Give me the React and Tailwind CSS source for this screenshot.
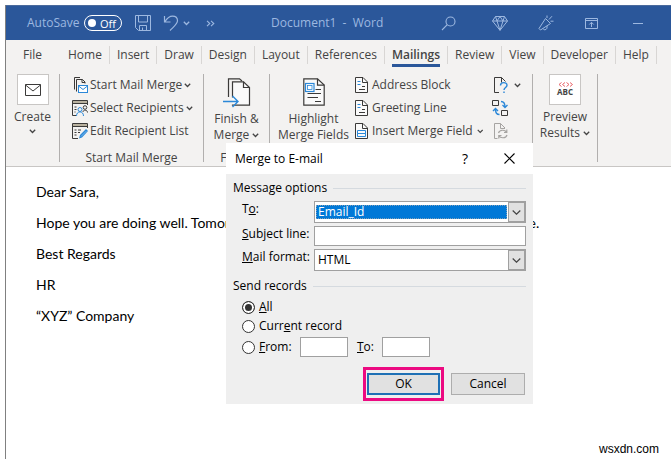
import React from 'react';

const TABS = ['Home', 'Insert', 'Draw', 'Design', 'Layout', 'References', 'Mailings', 'Review', 'View', 'Developer', 'Help'];

function Chevron({ className = '' }) {
  return (
    <svg className={`inline-block w-[7px] h-[5px] ${className}`} viewBox="0 0 7 5" fill="none" stroke="currentColor" strokeWidth="1.3">
      <path d="M0.8 0.8L3.5 3.5L6.2 0.8" />
    </svg>
  );
}

function Divider() {
  return <div className="w-px h-[88px] bg-[#b1afae] shrink-0" />;
}

/* ---------- title bar ---------- */

function TitleBar() {
  return (
    <header className="flex items-center h-[35px] bg-[#2b579a] border-t border-[#4a6a9c] text-[#9db8e0] text-xs pl-[21px] pr-[28px]">
      <span className="w-[57px] whitespace-nowrap">AutoSave</span>
      <button
        type="button"
        role="switch"
        aria-checked="false"
        aria-label="AutoSave"
        className="flex items-center justify-between w-[38px] h-4 rounded-full border border-white pl-[3px] pr-[5px] text-white text-[11px] leading-none"
      >
        <span className="w-2 h-2 rounded-full bg-white" />
        Off
      </button>
      <button type="button" aria-label="Save" className="ml-[13px]">
        <svg className="w-4 h-4" viewBox="0 0 16 16" fill="none" stroke="currentColor">
          <path d="M0.5 0.5h15v15h-12l-3-3zM3.5 0.5v6.5h9v-6.5M4.5 15.5v-5h7v5M7.5 15.5v-3" />
        </svg>
      </button>
      <button type="button" aria-label="Undo" className="ml-3">
        <svg className="w-4 h-4" viewBox="0 0 16 16" fill="none" stroke="currentColor" strokeWidth="1.2">
          <path d="M1.5 1v6h6M1.8 6.8C4 3.5 6.5 1.2 9.5 1.2c3 0 5 2 5 4.6 0 2.8-2 4.2-7.5 9.7" />
        </svg>
      </button>
      <button type="button" aria-label="Undo history" className="ml-1 flex">
        <Chevron />
      </button>
      <button type="button" aria-label="More commands" className="ml-4 flex">
        <svg className="w-[9px] h-[7px]" viewBox="0 0 9 7" fill="none" stroke="currentColor" strokeWidth="1.1">
          <path d="M1 0.8L3.8 3.5L1 6.2M5 0.8L7.8 3.5L5 6.2" />
        </svg>
      </button>
      <h1 className="flex-1 pl-14 whitespace-pre">Document1  -  Word</h1>
      <div className="flex items-center">
        <button type="button" aria-label="Search">
          <svg className="w-[15px] h-[15px]" viewBox="0 0 15 15" fill="none" stroke="currentColor" strokeWidth="1.1">
            <circle cx="9.5" cy="5.5" r="4.5" />
            <path d="M6.3 8.7L1 14" />
          </svg>
        </button>
        <button type="button" aria-label="Premium" className="ml-9">
          <svg className="w-4 h-[15px]" viewBox="0 0 16 15" fill="none" stroke="currentColor">
            <path d="M3.5 0.5h9l3 4.5L8 14.3L0.5 5zM0.5 5h15M5 5l3 9.3L11 5M3.5 0.5L5 5L8 0.5L11 5L12.5 0.5" />
          </svg>
        </button>
        <button type="button" aria-label="What's new" className="ml-[30px]">
          <svg className="w-4 h-4" viewBox="0 0 16 16" fill="none" stroke="currentColor">
            <path d="M7.5 3.5L1 13.5L2.5 15L12.5 8.5zM5 13.5c0.5 1.8 3.2 1.8 4-0.3v-2.2M9 3V0.5M11 4.5L14 1.2M12.5 6.2h3" />
          </svg>
        </button>
        <button type="button" aria-label="Ribbon display options" className="ml-[31px]">
          <svg className="w-[13px] h-[11px]" viewBox="0 0 13 11" fill="none" stroke="currentColor">
            <path d="M0.5 0.5h12v10h-12zM0.5 2.5h12M6.5 9V4.5M4.3 6.5L6.5 4.3L8.7 6.5" />
          </svg>
        </button>
        <button type="button" aria-label="Minimize" className="ml-[35px]">
          <span className="block w-[10px] h-px bg-[#9db8e0]" />
        </button>
      </div>
    </header>
  );
}

/* ---------- tabs ---------- */

function TabBar() {
  return (
    <nav className="flex items-center h-[30px] text-xs text-[#444444] overflow-hidden">
      <button type="button" className="w-[62px] pl-[17px] text-left shrink-0">File</button>
      {TABS.map((tab) => (
        <div key={tab} className="flex items-center shrink-0">
          {tab !== 'Home' && <div className="w-px h-[18px] bg-[#d8d6d4] mr-[7px]" />}
          <button
            type="button"
            className={
              tab === 'Mailings'
                ? 'relative mr-[7px] font-semibold after:absolute after:inset-x-0 after:-bottom-1 after:h-[3px] after:bg-[#2b579a]'
                : 'mr-[7px]'
            }
          >
            {tab}
          </button>
        </div>
      ))}
      <div className="w-px h-[18px] bg-[#d8d6d4]" />
    </nav>
  );
}

/* ---------- ribbon icons ---------- */

function StartMergeIcon() {
  return (
    <svg className="w-4 h-4 shrink-0" viewBox="0 0 16 16" fill="none" stroke="#3b3a39">
      <path d="M2.5 12.5V0.5H8M4.5 14.5V2.5H10.5L13 5V6.5M10 2.5V5.5H13" />
      <rect x="6.5" y="8.5" width="9" height="7" fill="#fff" stroke="#2b88d8" />
      <path d="M6.5 9L11 12.5L15.5 9" stroke="#2b88d8" />
    </svg>
  );
}

function SelectRecipientsIcon() {
  return (
    <svg className="w-4 h-4 shrink-0" viewBox="0 0 16 16" fill="none" stroke="#3b3a39">
      <path d="M4 15.5H0.5V0.5H15.5V5" />
      <path d="M1 2H15" stroke="#b8b19f" strokeWidth="2" />
      <path d="M0.5 3.5H15M2.5 7h2M2.5 9.5h2M2.5 12h1" />
      <circle cx="13" cy="7.5" r="1.8" />
      <path d="M11 12c0-2.5 4.5-2.5 4.5 0.5" />
      <circle cx="8" cy="9.5" r="2" stroke="#2b88d8" />
      <path d="M4.5 16c0-5.5 7-5.5 7 0" stroke="#2b88d8" />
    </svg>
  );
}

function EditListIcon() {
  return (
    <svg className="w-4 h-4 shrink-0" viewBox="0 0 16 16" fill="none" stroke="#3b3a39">
      <path d="M6 15.5H0.5V0.5H15.5V5" />
      <path d="M1 2H15" stroke="#b8b19f" strokeWidth="2" />
      <path d="M0.5 3.5H15M2.5 7h2M6 7h3M2.5 9.5h2M6 9.5h2M2.5 12h2" />
      <path d="M7 15.5L8 12L14 6L16 8L10 14.5z" fill="#2b88d8" stroke="none" />
      <path d="M9 13.5L14.5 8" stroke="#9fcdf0" strokeWidth="0.7" />
    </svg>
  );
}

function FinishIcon() {
  return (
    <svg className="w-7 h-7 overflow-visible" viewBox="0 0 28 28" fill="none" stroke="#3b3a39" strokeWidth="1.2">
      <path d="M5.5 19V0.8H16.5L19 3" />
      <path d="M9.5 19.5V3.8H20.5L26.5 9.5V27.2H9.5V26.5" fill="#fafafa" />
      <path d="M20.5 3.8V9.5H26.5" />
      <path d="M0 23.5H15M9.5 18L15 23.5L9.5 29" stroke="#2b88d8" strokeWidth="1.4" />
    </svg>
  );
}

function HighlightIcon() {
  return (
    <svg className="w-[22px] h-7" viewBox="0 0 22 28" fill="none" stroke="#3b3a39" strokeWidth="1.2">
      <path d="M0.8 0.8H14.5L21.2 7V27.2H0.8z" fill="#fafafa" />
      <path d="M14.5 0.8V7.2H21.2M12.5 11.5H18M4.5 15.5H18M4.5 19.5H15M12 23.5H18" />
      <rect x="2.5" y="5.5" width="8.5" height="8" fill="#fff" stroke="#2b88d8" />
      <rect x="4.5" y="7.5" width="4.5" height="4" stroke="#2b88d8" strokeWidth="0.8" />
    </svg>
  );
}

function PageIcon({ children }) {
  return (
    <svg className="w-[13px] h-4 shrink-0" viewBox="0 0 13 16" fill="none" stroke="#3b3a39">
      <path d="M0.5 0.5H8L12.5 5V15.5H0.5z" fill="#fafafa" />
      <path d="M7.5 0.5V5.5H12.5" />
      {children}
    </svg>
  );
}

function CheckErrorsIcon() {
  return (
    <svg className="w-4 h-4" viewBox="0 0 16 16" fill="none" stroke="#3b3a39">
      <path d="M7 15.5H2.5V0.5H9.5L13.5 4.5M9.5 0.5V5.5" />
      <path d="M8.5 8.5c0-3.8 6.5-3.8 6.5-0.3c0 2.3-3 2.3-3 4.8M12 14.5V16" stroke="#2b88d8" strokeWidth="1.4" />
    </svg>
  );
}

function MatchFieldsIcon() {
  return (
    <svg className="w-4 h-4" viewBox="0 0 16 16" fill="none" stroke="#3b3a39">
      <path d="M0.5 0.5h6v5h-6zM9.5 10.5h6v5h-6z" />
      <path d="M9 1.5c3 0 4 1.5 4 5.5M10.5 5L13 7.5L15.5 5M7.5 14.5c-3 0-4-1.5-4-5.5M1 11L3.5 8.5L6 11" stroke="#2b88d8" strokeWidth="1.3" />
    </svg>
  );
}

function UpdateLabelsIcon() {
  return (
    <svg className="w-4 h-4" viewBox="0 0 16 16" fill="none" stroke="#a6a4a2">
      <path d="M5.5 15.5H2.5V0.5H8.5L13 5M8.5 0.5V5.5H13" />
      <path d="M6.5 10c1-3.5 6.5-3.5 8-0.8M14.8 6.5v3H12M15 12c-1 3.5-6.5 3.5-8 0.8M6.8 15.5v-3H9.5" strokeWidth="1.2" />
    </svg>
  );
}

/* ---------- ribbon ---------- */

function Ribbon() {
  return (
    <section className="flex h-[97px] pt-1 text-xs leading-4 text-[#444444] border-b border-[#c8c6c4] whitespace-nowrap overflow-hidden">
      <button type="button" className="flex flex-col items-center w-[53px] shrink-0">
        <span className="flex items-center justify-center w-8 h-[31px] bg-white border border-[#c8c6c4]">
          <svg className="w-4 h-3" viewBox="0 0 16 12" fill="none" stroke="#3b3a39">
            <path d="M0.5 0.5h15v11h-15zM0.5 1L8 7L15.5 1" />
          </svg>
        </span>
        <span className="mt-1">Create</span>
        <Chevron className="mt-1" />
      </button>
      <Divider />

      <div className="flex flex-col w-[143px] shrink-0 pl-3 pt-[3px]">
        <div className="flex flex-col gap-[7px] items-start">
          <button type="button" className="flex items-center gap-0.5">
            <StartMergeIcon />Start Mail Merge<Chevron />
          </button>
          <button type="button" className="flex items-center gap-0.5">
            <SelectRecipientsIcon />Select Recipients<Chevron />
          </button>
          <button type="button" className="flex items-center gap-0.5">
            <EditListIcon />Edit Recipient List
          </button>
        </div>
        <div className="mt-[11px] pr-3 text-center">Start Mail Merge</div>
      </div>
      <Divider />

      <div className="flex flex-col w-[65px] shrink-0 items-center pt-1">
        <button type="button" className="flex flex-col items-center">
          <FinishIcon />
          <span className="mt-[5px]">Finish &amp;</span>
          <span>Merge <Chevron className="align-middle" /></span>
        </button>
        <div className="mt-[7px]">Finish</div>
      </div>
      <Divider />

      <div className="flex w-[262px] shrink-0 pl-2.5 pt-[3px]">
        <button type="button" className="flex flex-col items-center w-[67px] pt-px">
          <HighlightIcon />
          <span className="mt-[5px]">Highlight</span>
          <span>Merge Fields</span>
        </button>
        <div className="flex flex-col gap-[7px] items-start flex-1 ml-2">
          <button type="button" className="flex items-center gap-1">
            <PageIcon>
              <path d="M2.5 4.5h3M2.5 7.5h3" stroke="#2b88d8" />
              <path d="M7 9.5h3M4 12.5h6" />
            </PageIcon>
            Address Block
          </button>
          <button type="button" className="flex items-center gap-1">
            <PageIcon>
              <path d="M2.5 4.5h3M2.5 7.5h3" stroke="#2b88d8" />
              <path d="M7 9.5h3M4 12.5h6" />
            </PageIcon>
            Greeting Line
          </button>
          <button type="button" className="flex items-center gap-1 w-[128px]">
            <PageIcon>
              <path d="M2.5 7.5h8v3h-8zM2.5 10.5h8v3h-8z" stroke="#2b88d8" />
            </PageIcon>
            Insert Merge Field
            <Chevron className="ml-auto" />
          </button>
        </div>
        <div className="flex flex-col gap-[7px] items-start w-[40px]">
          <button type="button" aria-label="Check for errors" className="flex items-center gap-1.5">
            <CheckErrorsIcon />
            <Chevron />
          </button>
          <button type="button" aria-label="Match fields"><MatchFieldsIcon /></button>
          <button type="button" aria-label="Update labels" disabled><UpdateLabelsIcon /></button>
        </div>
      </div>
      <Divider />

      <button type="button" className="flex flex-col items-center w-[64px] shrink-0">
        <span className="flex flex-col items-center justify-center w-8 h-[31px] bg-white border border-[#c8c6c4]">
          <svg className="w-[15px] h-[5px]" viewBox="0 0 15 5" fill="none" stroke="#e8646a">
            <path d="M3.5 0.5L1 2.5L3.5 4.5M7 0.5L4.5 2.5L7 4.5M8.5 0.5L11 2.5L8.5 4.5M12 0.5L14.5 2.5L12 4.5" />
          </svg>
          <span className="text-[8px] leading-[10px] font-bold">ABC</span>
        </span>
        <span className="mt-1">Preview</span>
        <span>Results <Chevron className="align-middle" /></span>
      </button>
      <Divider />
    </section>
  );
}

/* ---------- dialog ---------- */

function Legend({ children }) {
  return (
    <div className="flex items-center gap-1.5 leading-4">
      <h3>{children}</h3>
      <div className="flex-1 h-px bg-[#d5dadf]" />
    </div>
  );
}

function DropArrow() {
  return (
    <span className="flex items-center justify-center w-[17px] self-stretch bg-[#e1e1e1] border border-[#a0a0a0] pointer-events-none">
      <svg className="w-[9px] h-[5px]" viewBox="0 0 9 5" fill="none" stroke="#444" strokeWidth="1.2">
        <path d="M0.7 0.5L4.5 4.2L8.3 0.5" />
      </svg>
    </span>
  );
}

const RADIO =
  'appearance-none w-[13px] h-[13px] shrink-0 rounded-full border border-[#333] bg-white checked:bg-[#333] checked:shadow-[inset_0_0_0_2px_white]';

function MergeDialog() {
  return (
    <div
      role="dialog"
      aria-labelledby="dialog-title"
      className="absolute left-[226px] top-[143px] w-[307px] bg-[#efefef] text-black text-xs"
    >
      <div className="flex items-center h-[31px] bg-white pl-[9px] pr-[18px]">
        <h2 id="dialog-title" className="flex-1">Merge to E-mail</h2>
        <button type="button" aria-label="Help" className="mr-9 text-sm leading-none font-medium">?</button>
        <button type="button" aria-label="Close">
          <svg className="w-[11px] h-[11px]" viewBox="0 0 11 11" fill="none" stroke="#000" strokeWidth="1.1">
            <path d="M0.5 0.5L10.5 10.5M10.5 0.5L0.5 10.5" />
          </svg>
        </button>
      </div>

      <form className="px-[7px] pt-1.5 pb-[3px]" onSubmit={(e) => e.preventDefault()}>
        <Legend>Message options</Legend>

        <div className="grid grid-cols-[72px_1fr] gap-y-[3px] pl-[9px] mt-[5px]">
          <label htmlFor="to">T<u>o</u>:</label>
          <div className="flex h-[22px] bg-white border border-[#a0a0a0]">
            <select
              id="to"
              className="appearance-none flex-1 min-w-0 mx-px my-[3px] pl-px leading-3 bg-[#0078d7] text-white border border-dotted border-[#7f9fb8] outline-none"
            >
              <option>Email_Id</option>
            </select>
            <DropArrow />
          </div>
          <label htmlFor="subject"><u>S</u>ubject line:</label>
          <input id="subject" type="text" className="h-5 min-w-0 px-1 bg-white border border-[#a0a0a0] outline-none" />
          <label htmlFor="format"><u>M</u>ail format:</label>
          <div className="flex h-[22px] bg-white border border-[#a0a0a0]">
            <select id="format" className="appearance-none flex-1 min-w-0 pl-[3px] bg-white outline-none">
              <option>HTML</option>
            </select>
            <DropArrow />
          </div>
        </div>

        <div className="mt-[7px]">
          <Legend>Send records</Legend>
        </div>

        <div className="pl-[9px] mt-1 leading-4">
          <label className="flex items-center gap-1 h-[18px]">
            <input type="radio" name="records" defaultChecked className={RADIO} />
            <span><u>A</u>ll</span>
          </label>
          <label className="flex items-center gap-1 h-5">
            <input type="radio" name="records" className={RADIO} />
            <span>Curr<u>e</u>nt record</span>
          </label>
          <div className="flex items-center h-5 mt-px">
            <label className="flex items-center gap-1 w-[58px]">
              <input type="radio" name="records" className={RADIO} />
              <span><u>F</u>rom:</span>
            </label>
            <input type="text" aria-label="From record" className="w-12 h-5 px-1 bg-white border border-[#a0a0a0] outline-none" />
            <label htmlFor="last" className="w-[34px] pl-[9px]"><u>T</u>o:</label>
            <input id="last" type="text" className="w-12 h-5 px-1 bg-white border border-[#a0a0a0] outline-none" />
          </div>
        </div>

        <div className="flex items-center justify-end gap-[7px] mt-[10px] pr-px">
          <div className="border-[3px] border-[#ec0a81] px-px py-[3px]">
            <button type="submit" className="block w-[73px] h-[22px] border-2 border-[#1f70b5] bg-[#e1e1e1] outline-none">OK</button>
          </div>
          <button type="button" className="w-[74px] h-[22px] border border-[#adadad] bg-[#e1e1e1]">Cancel</button>
        </div>
      </form>
    </div>
  );
}

export default function App() {
  return (
    <div className="relative min-h-screen flex flex-col bg-white pt-[5px] pl-[5px] font-['Open_Sans','Noto_Sans',sans-serif]">
      <div className="flex-1 flex flex-col border-l border-[#808080]">
        <TitleBar />
        <div className="bg-[#f3f2f1]">
          <TabBar />
          <Ribbon />
        </div>
        <main className="flex-1 flex flex-col pl-[30px] pt-[15px] font-['Lato',sans-serif] text-sm leading-[19px] text-black">
          <div className="flex flex-col gap-3 whitespace-nowrap">
            <p>Dear Sara,</p>
            <p>Hope you are doing well. Tomorrow we have a client meeting scheduled at a place.</p>
            <p>Best Regards</p>
            <p>HR</p>
            <p>“XYZ” Company</p>
          </div>
          <footer className="mt-auto self-end pr-3 font-['Liberation_Sans',sans-serif] text-xs leading-[19px]">wsxdn.com</footer>
        </main>
      </div>
      <MergeDialog />
    </div>
  );
}
